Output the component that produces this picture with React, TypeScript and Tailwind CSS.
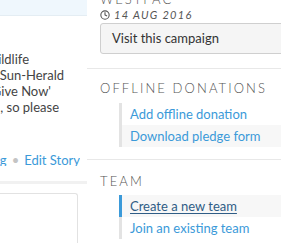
import { Clock } from 'lucide-react';

const storyLines = [
    { text: 'Wildlife', w: 'w-[29px]' },
    { text: 'The Sun-Herald', w: 'w-[64px]' },
    { text: "'Give Now'", w: 'w-[51px]' },
    { text: 'needed, so please', w: 'w-[59px]' },
];

function SideLinks({ items }: { items: { label: string; active?: boolean; shaded?: boolean }[] }) {
    return (
        <ul className="ml-[19px] flex flex-col">
            {items.map((item) => (
                <li
                    key={item.label}
                    className={
                        'border-l-[3px] py-[3px] pl-[8px] text-[13px] leading-4 ' +
                        (item.active ? 'border-[#3b9ad9] ' : 'border-[#e3e3e3] ') +
                        (item.shaded ? 'bg-[#f7f7f7]' : 'bg-white')
                    }
                >
                    <a
                        className={
                            item.active
                                ? 'text-[#2f5d86] underline underline-offset-2'
                                : 'text-[#3b9ad9]'
                        }
                    >
                        {item.label}
                    </a>
                </li>
            ))}
        </ul>
    );
}

export default function App() {
    return (
        <div className="flex h-[243px] w-[281px] overflow-hidden bg-white font-['Lato','Liberation_Sans',sans-serif]">
            {/* Story column (cropped) */}
            <div className="flex w-[87px] shrink-0 flex-col">
                <div className="h-[19px] border-b border-[#e4edf3] bg-[#eff7fd]" />
                <div className="mt-[35px] flex flex-col text-[13px] leading-4 text-[#444]">
                    {storyLines.map((line) => (
                        <div key={line.text} className={`${line.w} flex justify-end overflow-hidden whitespace-nowrap`}>
                            {line.text}
                        </div>
                    ))}
                </div>
                <div className="mt-[36px] flex w-[80px] justify-end overflow-hidden whitespace-nowrap text-[13px] leading-[18px]">
                    <span className="text-[#3b9ad9]">Share Blog</span>
                    <span className="mx-[5px] text-[#c4c4c4]">•</span>
                    <span className="text-[#3b9ad9]">Edit Story</span>
                </div>
                <div className="mt-[15px] h-[3px] bg-[#f1f1f1]" />
                <div className="mt-[9px] h-[60px] w-[78px] rounded-tr-[3px] border-t border-r border-[#e2e2e2]" />
            </div>

            {/* Sidebar */}
            <div className="flex min-w-0 flex-1 flex-col">
                <div className="pb-[14px] pl-[13px]">
                    <div className="mt-[-9px] text-[13px] leading-4 font-light tracking-[2px] text-[#555]">WESTPAC</div>
                    <div className="flex items-center gap-[4px] text-[11px] leading-4 text-[#555]">
                        <Clock size={10} strokeWidth={2.6} />
                        <span className="italic tracking-[1.3px]">14 AUG 2016</span>
                    </div>
                    <button className="flex h-[31px] w-[200px] shrink-0 items-center rounded-[3px] border border-[#cfcfcf] bg-[#f5f5f5] px-[11px] text-[13px] text-[#333]">
                        Visit this campaign
                    </button>
                </div>

                <div className="border-t border-[#e8e8e8] pt-[11px] pb-[12px] pl-[13px]">
                    <h3 className="text-[13px] leading-4 font-light tracking-[2.1px] text-[#555]">OFFLINE DONATIONS</h3>
                    <div className="mt-[7px]">
                        <SideLinks
                            items={[
                                { label: 'Add offline donation' },
                                { label: 'Download pledge form', shaded: true },
                            ]}
                        />
                    </div>
                </div>

                <div className="border-t border-[#e8e8e8] pt-[13px] pl-[13px]">
                    <h3 className="text-[13px] leading-4 font-light tracking-[2.1px] text-[#555]">TEAM</h3>
                    <div className="mt-[6px]">
                        <SideLinks
                            items={[
                                { label: 'Create a new team', active: true, shaded: true },
                                { label: 'Join an existing team' },
                            ]}
                        />
                    </div>
                </div>
            </div>
        </div>
    );
}
